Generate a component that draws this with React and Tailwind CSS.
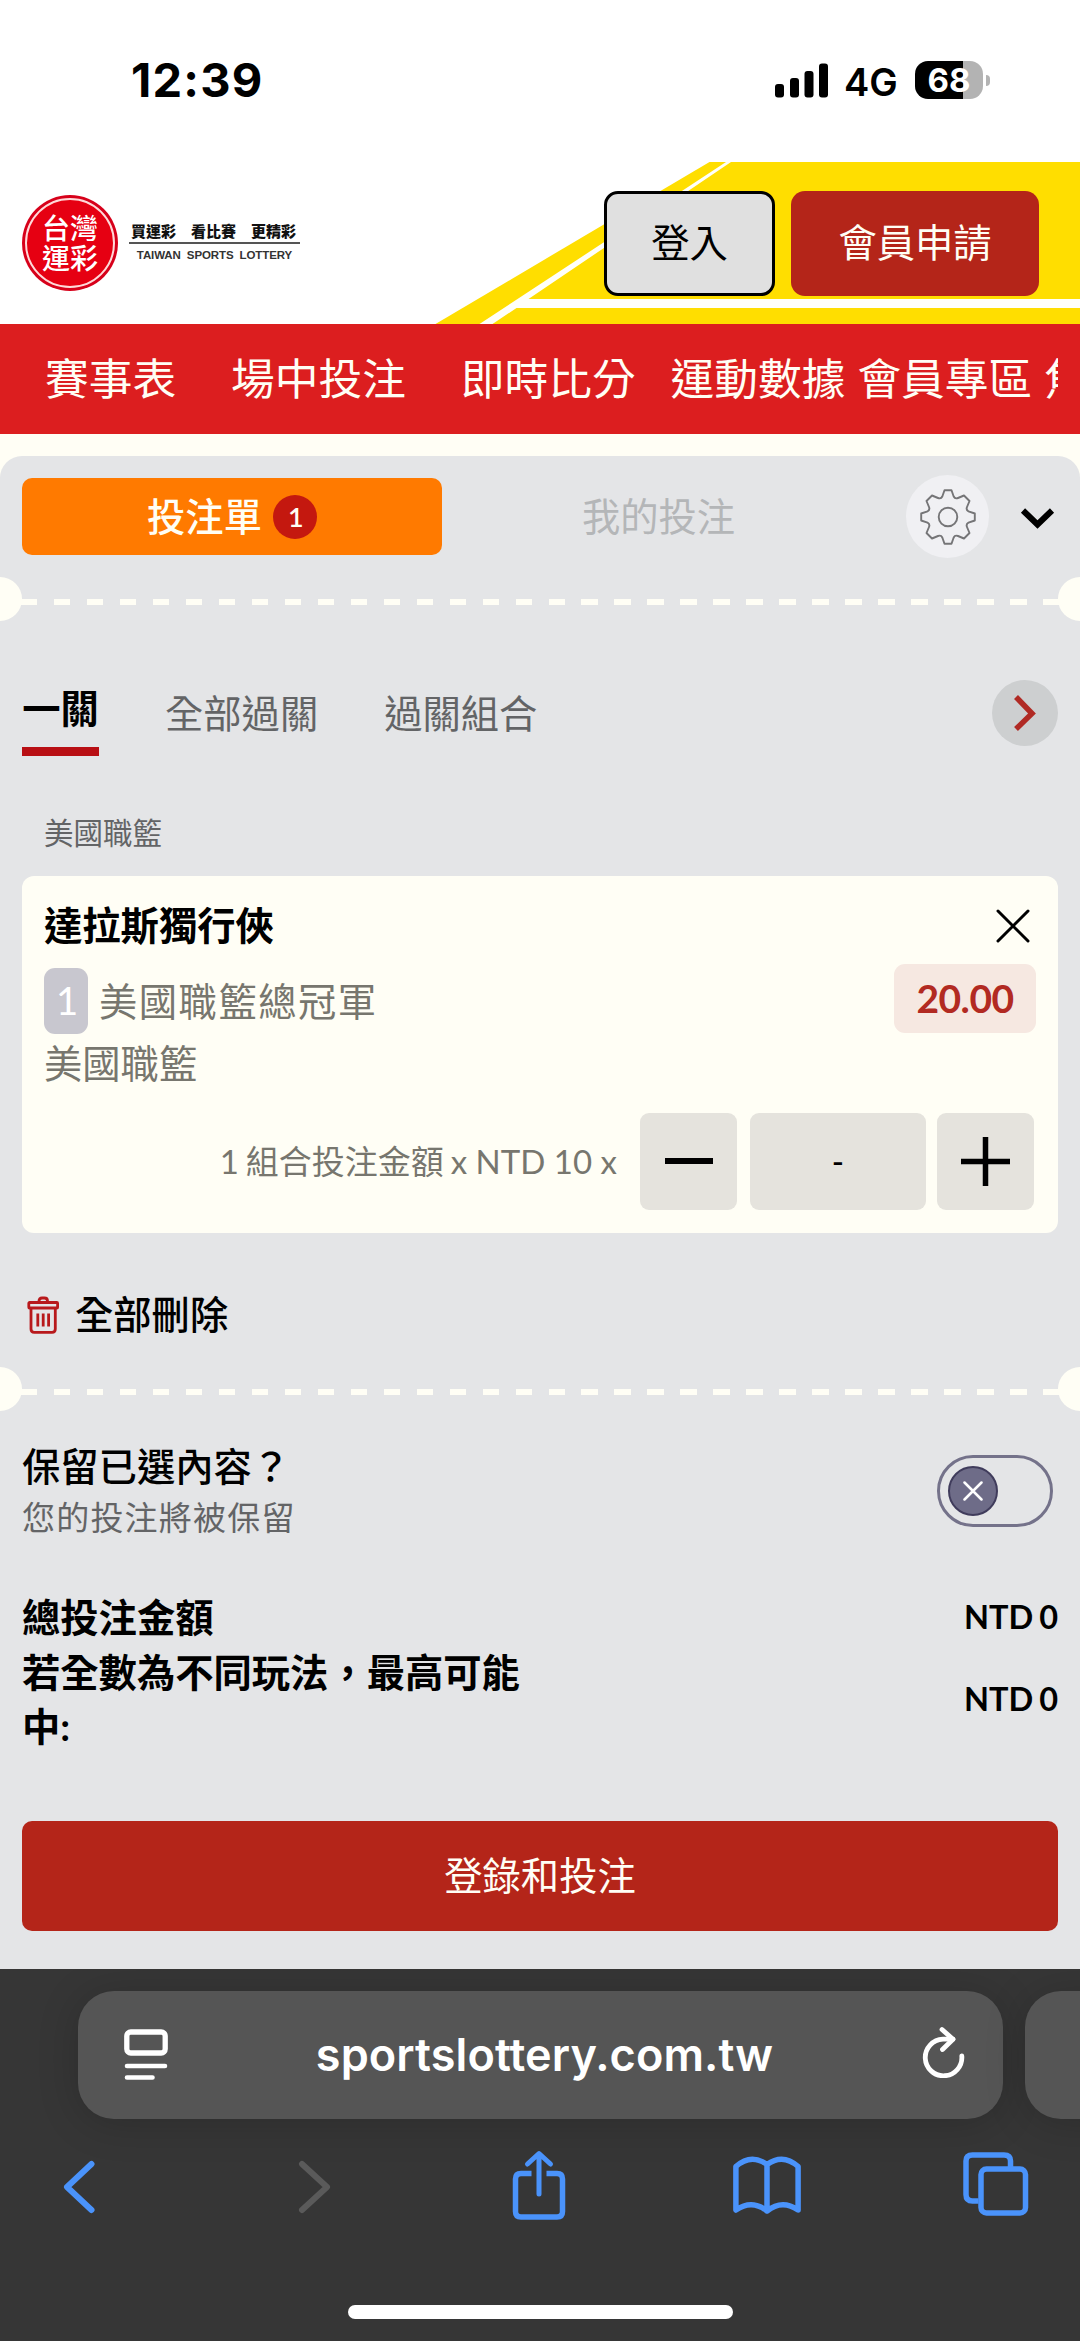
import { useState } from "react";

const navItems = [
    { label: "賽事表", gap: "ml-[45px]" },
    { label: "場中投注", gap: "ml-[55px]" },
    { label: "即時比分", gap: "ml-[55px]" },
    { label: "運動數據", gap: "ml-[35px]" },
    { label: "會員專區", gap: "ml-[12px]" },
    { label: "焦點", gap: "ml-[12px]" },
];

function StatusBar() {
    return (
        <div className="flex h-[162px] items-start bg-white pt-[61px] pl-[131px] font-['Inter',sans-serif] text-black">
            <span className="w-[643px] text-[47px] leading-[38px] font-bold tracking-[1.200px]">12:39</span>
            <svg className="mt-[2px] h-[35px] w-[54px]" viewBox="0 0 54 35">
                <rect x="1" y="21" width="9" height="13.5" rx="3" />
                <rect x="16" y="15" width="9" height="19.5" rx="3" />
                <rect x="30.500" y="8" width="9" height="26.500" rx="3" />
                <rect x="45" y="0.500" width="9" height="34" rx="3" />
            </svg>
            <span className="ml-[16px] w-[70px] text-[38px] leading-[42px] font-semibold">4G</span>
            <div className="ml-[1px] flex h-[38px] w-[68px] items-center justify-center rounded-[13px] bg-[linear-gradient(90deg,#000_48px,#b3b3b3_48px)] text-[33px] leading-none font-bold text-white">
                68
            </div>
            <div className="mt-[14px] ml-[3px] h-[11px] w-[4px] rounded-r-full bg-[#b3b3b3]" />
        </div>
    );
}

function Logo() {
    return (
        <div className="flex items-center">
            <div className="flex size-[96px] items-center justify-center rounded-full bg-[#d7001a] p-[3px]">
                <div className="flex size-full items-center justify-center rounded-full border-2 border-[#ffd9d9] bg-[#e60012] text-center text-[28px] leading-[30px] font-medium text-white">
                    <p>台灣<br />運彩</p>
                </div>
            </div>
            <div className="mb-[4px] ml-[11px] flex w-[171px] flex-col items-center text-[#111]">
                <div className="flex w-full justify-between pr-[4px] pl-[2px] text-[15px] leading-[20px] font-black">
                    <span>買運彩</span>
                    <span>看比賽</span>
                    <span>更精彩</span>
                </div>
                <div className="mt-[1px] h-[2px] w-full bg-[#555]" />
                <span className="mt-[4px] font-['Liberation_Sans',sans-serif] text-[11.5px] leading-[14px] font-bold tracking-[-0.1px] whitespace-nowrap text-[#333] [word-spacing:3px]">
                    TAIWAN SPORTS LOTTERY
                </span>
            </div>
        </div>
    );
}

function Header() {
    return (
        <header className="relative h-[162px] bg-white">
            <svg className="absolute inset-0 h-[162px] w-[1080px]" viewBox="0 0 1080 162">
                <path d="M709.500 0H1080V162H435.500Z" fill="#ffde00" />
                <path d="M726 0H731L528.500 137H1080V146H516.500L492.500 162H479.500Z" fill="#fffffa" />
            </svg>
            <div className="relative flex h-full items-center pr-[41px] pl-[22px]">
                <Logo />
                <button className="ml-auto h-[105px] w-[171px] rounded-[14px] border-[3px] border-black bg-[#e0e0e0] text-[38.3px] text-black">
                    登入
                </button>
                <button className="ml-[16px] h-[105px] w-[248px] rounded-[14px] bg-[#b42519] text-[38.3px] text-[#fffef5]">
                    會員申請
                </button>
            </div>
        </header>
    );
}

function Divider() {
    return (
        <div className="relative flex h-[44px] items-center overflow-hidden pt-[6px]">
            <div className="absolute top-0 left-[-22px] size-[44px] rounded-full bg-[#fffef5]" />
            <div className="mx-[21px] h-[6px] flex-1 bg-[repeating-linear-gradient(90deg,#fffef5_0_16.5px,transparent_16.5px_32.97px)]" />
            <div className="absolute top-0 right-[-22px] size-[44px] rounded-full bg-[#fffef5]" />
        </div>
    );
}

function GearIcon() {
    return (
        <svg className="size-[56px]" viewBox="-28 -28 56 56" fill="none" stroke="#757577" strokeWidth="1.900" strokeLinejoin="round">
            <circle r="9.300" />
            <path d="M-3.500 -26.800H3.500L5.700 -20.500Q7 -17.800 10 -19L16 -21.500L21.500 -16L19 -10Q17.800 -7 20.500 -5.700L26.800 -3.500V3.500L20.500 5.700Q17.800 7 19 10L21.500 16L16 21.500L10 19Q7 17.800 5.700 20.500L3.500 26.800H-3.500L-5.700 20.500Q-7 17.800 -10 19L-16 21.500L-21.500 16L-19 10Q-17.800 7 -20.500 5.700L-26.800 3.500V-3.500L-20.500 -5.700Q-17.800 -7 -19 -10L-21.500 -16L-16 -21.500L-10 -19Q-7 -17.800 -5.700 -20.500Z" />
        </svg>
    );
}

function SlipHeader() {
    return (
        <div className="flex h-[121px] items-start pt-[19px] pl-[22px]">
            <button className="mt-[3px] flex h-[77px] w-[420px] items-center justify-center gap-[11px] rounded-[10px] bg-[#ff7a00] text-[38.3px] font-medium text-[#fffef5]">
                投注單
                <span className="flex size-[44px] items-center justify-center rounded-full bg-[#c4180f] pl-[2px] text-[27px] leading-none font-semibold">1</span>
            </button>
            <button className="mt-[3px] h-[77px] w-[433px] text-[38.3px] text-[#b4b6b8]">我的投注</button>
            <button className="ml-[31px] flex size-[83px] items-center justify-center rounded-full bg-[#f0f0f3]">
                <GearIcon />
            </button>
            <svg className="mt-[32px] ml-[31px] h-[22px] w-[36px]" viewBox="0 0 36 22" fill="none" stroke="#000" strokeWidth="6">
                <path d="M3 3.500L17.500 17.500L32 3.500" />
            </svg>
        </div>
    );
}

function Tabs() {
    const [tab, setTab] = useState("一關");

    return (
        <div className="flex h-[76px] items-start pr-[22px] pl-[22px] text-[38.3px]">
            <button onClick={() => setTab("一關")} className="h-[76px] w-[77px] border-b-[9px] border-[#b80f14] pb-[11px] leading-[56px] font-bold text-black">
                一關
            </button>
            <button onClick={() => setTab("全部過關")} className="ml-[66px] leading-[66px] text-[#636466]">
                全部過關
            </button>
            <button onClick={() => setTab("過關組合")} className="ml-[66px] leading-[66px] text-[#636466]">
                過關組合
            </button>
            <button className="ml-auto flex size-[66px] items-center justify-center rounded-full bg-[#cdcfd0]">
                <svg className="h-[38px] w-[24px]" viewBox="0 0 24 38" fill="none" stroke="#b02a24" strokeWidth="5.500">
                    <path d="M3 3L19 19.500L3 35" />
                </svg>
            </button>
        </div>
    );
}

function BetCard() {
    return (
        <div className="mx-[22px] flex h-[357px] flex-col rounded-[12px] bg-[#fffef5] pr-[22px] pl-[22px]">
            <div className="mt-[20px] flex h-[60px] items-center justify-between">
                <span className="text-[38.3px] font-bold text-black">達拉斯獨行俠</span>
                <svg className="mr-[6px] size-[34px]" viewBox="0 0 34 34" stroke="#000" strokeWidth="3" strokeLinecap="round">
                    <path d="M2 2L32 32M32 2L2 32" />
                </svg>
            </div>
            <div className="mt-[8px] flex items-start text-[38.3px] text-[#77766e]">
                <span className="mt-[4px] flex h-[66px] w-[44px] items-center justify-center rounded-[11px] bg-[#c8c7cf] pl-[2px] text-white">1</span>
                <span className="ml-[11px] leading-[74px] tracking-[1.500px]">美國職籃總冠軍</span>
                <span className="ml-auto flex h-[69px] w-[142px] items-center justify-center rounded-[11px] bg-[#f6e8e1] text-[39px] font-bold tracking-[-0.500px] text-[#b22a22]">
                    20.00
                </span>
            </div>
            <div className="h-[51px] text-[38.3px] leading-[51px] text-[#77766e]">美國職籃</div>
            <div className="mt-[24px] mr-[2px] flex items-center justify-end">
                <span className="mr-[23px] text-[33px] whitespace-pre text-[#77766e]">
                    <span className="[word-spacing:-1.5px]">1 組合投注金額 x</span> NTD 10 x
                </span>
                <button className="flex size-[97px] items-center justify-center rounded-[9px] bg-[#e5e3dd]">
                    <span className="mb-[1px] h-[6px] w-[48px] bg-black" />
                </button>
                <div className="ml-[13px] flex h-[97px] w-[176px] items-center justify-center rounded-[9px] bg-[#e5e3dd] text-[33px] font-medium text-black">-</div>
                <button className="ml-[11px] flex size-[97px] items-center justify-center rounded-[9px] bg-[#e5e3dd]">
                    <svg className="size-[49px]" viewBox="0 0 49 49" stroke="#000" strokeWidth="5.500">
                        <path d="M0 24.500H49M24.500 0V49" />
                    </svg>
                </button>
            </div>
        </div>
    );
}

function TrashIcon() {
    return (
        <svg className="h-[38px] w-[32px]" viewBox="0 0 32 38" fill="none" stroke="#b8191c" strokeWidth="2.800" strokeLinejoin="round">
            <path d="M12 6.500V5Q12 2 15 2H17.500Q20.500 2 20.500 5V6.500" />
            <rect x="1.800" y="6.500" width="28.800" height="5.500" rx="0.800" />
            <path d="M4 12V33Q4 36.300 7.300 36.300H25Q28.300 36.300 28.300 33V12" />
            <path d="M10.800 17.500V30.500M16.200 17.500V30.500M21.600 17.500V30.500" />
        </svg>
    );
}

function KeepSelection() {
    return (
        <div className="flex h-[126px] items-start justify-between pt-[28px] pr-[27px] pl-[22px]">
            <div className="flex flex-col">
                <span className="text-[38.3px] leading-[54px] font-medium text-black">保留已選內容？</span>
                <span className="text-[33px] leading-[48px] tracking-[1.200px] text-[#636466]">您的投注將被保留</span>
            </div>
            <div className="mt-[16px] flex h-[72px] w-[116px] items-center rounded-full border-[3px] border-[#74728a] pl-[8px]">
                <div className="flex size-[50px] items-center justify-center rounded-full border-[2.500px] border-[#403c5c] bg-[#6e6c88]">
                    <svg className="size-[20px]" viewBox="0 0 20 20" stroke="#fff" strokeWidth="2.500" strokeLinecap="round">
                        <path d="M1.500 1.500L18.500 18.500M18.500 1.500L1.500 18.500" />
                    </svg>
                </div>
            </div>
        </div>
    );
}

function Totals() {
    return (
        <div className="mt-[53px] flex flex-col px-[22px] font-bold text-black">
            <div className="flex justify-between">
                <span className="text-[38.3px] leading-[54.5px]">總投注金額</span>
                <span className="text-[32.5px] leading-[53px] [word-spacing:-2px]">NTD 0</span>
            </div>
            <div className="flex items-center justify-between">
                <span className="w-[520px] text-[38.3px] leading-[54.5px]">若全數為不同玩法，最高可能中:</span>
                <span className="text-[32.5px] leading-[54px] [word-spacing:-2px]">NTD 0</span>
            </div>
        </div>
    );
}

function BrowserBar() {
    return (
        <div className="flex h-[372px] flex-col overflow-hidden bg-[#363636] pt-[22px]">
            <div className="flex w-[1180px] gap-[22px] pl-[78px]">
                <div className="flex h-[128px] w-[925px] items-center justify-between rounded-[36px] bg-[#555] pr-[38px] pl-[46px] shadow-[0_4px_40px_rgba(0,0,0,0.180)]">
                    <svg className="mt-[-3px] h-[52px] w-[44px]" viewBox="0 0 44 52" fill="none" stroke="#fff" strokeLinecap="round">
                        <rect x="2.800" y="4" width="38.400" height="21" rx="4" strokeWidth="5.300" />
                        <path d="M3 38H41M3 49.500H28.500" strokeWidth="4.600" />
                    </svg>
                    <span className="font-['Inter',sans-serif] text-[45px] font-semibold tracking-[0.100px] text-white">sportslottery.com.tw</span>
                    <svg className="mt-[-7px] h-[52px] w-[44px]" viewBox="0 0 44 52" fill="none" stroke="#fff" strokeWidth="4.800" strokeLinecap="round" strokeLinejoin="round">
                        <path d="M32 13.200H22A18.300 18.300 0 1 0 40.800 30" />
                        <path d="M21 3.500L32 13.200L21.500 23.500" />
                    </svg>
                </div>
                <div className="h-[128px] w-[140px] rounded-[36px] bg-[#555] shadow-[0_4px_40px_rgba(0,0,0,0.180)]" />
            </div>
            <div className="mt-[31px] flex h-[70px] items-center pl-[62px] text-[#4a93fb]" >
                <svg className="mt-[3px] h-[54px] w-[34px]" viewBox="0 0 34 54" fill="none" stroke="currentColor" strokeWidth="6" strokeLinecap="round" strokeLinejoin="round">
                    <path d="M29.500 4L5 27L29.500 50" />
                </svg>
                <svg className="mt-[3px] ml-[201px] h-[54px] w-[34px]" viewBox="0 0 34 54" fill="none" stroke="#5a5a5a" strokeWidth="6" strokeLinecap="round" strokeLinejoin="round">
                    <path d="M5 4L30 27L5 50" />
                </svg>
                <svg className="ml-[180px] h-[70px] w-[56px]" viewBox="0 0 56 70" fill="none" stroke="currentColor" strokeWidth="5.500" strokeLinecap="round" strokeLinejoin="round">
                    <path d="M20.500 23.500H10Q4.500 23.500 4.500 29V61.500Q4.500 67 10 67H46Q51.500 67 51.500 61.500V29Q51.500 23.500 46 23.500H35.500" strokeLinecap="butt" />
                    <path d="M28 44V4M16.500 14L28 3.500L39.500 14" strokeWidth="5" />
                </svg>
                <svg className="ml-[166px] h-[60px] w-[68px]" viewBox="0 0 68 60" fill="none" stroke="currentColor" strokeWidth="5.500" strokeLinecap="round" strokeLinejoin="round">
                    <path d="M34 56Q19 44 2.900 55V11.500Q18 -2 34 9.500Q50 -2 65.100 11.500V55Q49 44 34 56ZM34 9.500V56" />
                </svg>
                <svg className="ml-[162px] h-[66px] w-[66px]" viewBox="0 0 66 66" fill="none" stroke="currentColor" strokeWidth="5.500">
                    <path d="M15.500 49H9.500Q3 49 3 42.500V9Q3 3 9.500 3H41Q47.500 3 47.500 9V17" />
                    <rect x="18" y="17" width="44.500" height="44" rx="5.500" />
                </svg>
            </div>
            <div className="mx-auto mt-[85px] h-[14px] w-[385px] rounded-full bg-white" />
        </div>
    );
}

export default function App() {
    return (
        <div className="w-[1080px] overflow-hidden bg-[#fffef5] font-['Lato','Noto_Sans_CJK_TC',sans-serif]">
            <StatusBar />
            <Header />
            <nav className="h-[110px] bg-[#dc1e1f] pr-[22px]">
                <div className="flex h-full items-center overflow-hidden text-[43.7px] whitespace-nowrap text-[#fffef5]">
                    {navItems.map((item) => (
                        <a key={item.label} className={item.gap}>{item.label}</a>
                    ))}
                </div>
            </nav>
            <main className="mt-[22px] h-[1513px] rounded-t-[22px] bg-[#e4e5e7]">
                <SlipHeader />
                <Divider />
                <div className="h-[59px]" />
                <Tabs />
                <div className="flex h-[120px] items-center pt-[34px] pl-[44px] text-[29.500px] text-[#636466]">美國職籃</div>
                <BetCard />
                <div className="flex h-[134px] items-center pt-[30px] pl-[27px]">
                    <TrashIcon />
                    <span className="ml-[16px] text-[38.3px] font-medium text-black">全部刪除</span>
                </div>
                <Divider />
                <KeepSelection />
                <Totals />
                <button className="mx-[22px] mt-[67px] h-[110px] w-[1036px] rounded-[10px] bg-[#b42519] text-[38.3px] text-[#fffef5]">
                    登錄和投注
                </button>
            </main>
            <BrowserBar />
        </div>
    );
}
